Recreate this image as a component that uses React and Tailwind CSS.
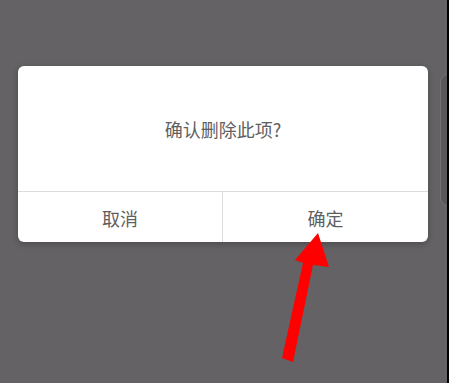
import React from "react";

function App() {
  return (
    <div
      className="relative w-[449px] h-[383px] overflow-hidden bg-[#646265] border-r-2 border-black pt-[66px] pl-[18px]"
      style={{ fontFamily: '"Noto Sans CJK SC", "Noto Sans", sans-serif' }}
    >
      {/* side handle peeking in on the right */}
      <div className="absolute left-[440px] top-[74px] w-[20px] h-[132px] rounded-[8px] bg-[#5a585b] border border-[#747275]"></div>

      {/* Dialog */}
      <div className="w-[410px] rounded-[6px] bg-white shadow-[0_2px_6px_rgba(0,0,0,0.25)] flex flex-col">
        <div className="h-[126px] pt-[2px] flex items-center justify-center text-[18px] text-[#5f5f5f] border-b border-[#dcdcdc]">
          确认删除此项?
        </div>
        <div className="h-[50px] grid grid-cols-2 text-[18px] text-[#5f5f5f]">
          <button className="flex items-center justify-center pt-[2px] border-r border-[#dcdcdc]">
            取消
          </button>
          <button className="flex items-center justify-center pt-[2px]">确定</button>
        </div>
      </div>

      {/* Red arrow */}
      <svg
        className="absolute left-0 top-0"
        width="449"
        height="383"
        viewBox="0 0 449 383"
      >
        <polygon
          points="282,358 293,362 313,265 329,267 318,233 295,260 303,263"
          fill="#ff0000"
        />
      </svg>
    </div>
  );
}

export default App;
